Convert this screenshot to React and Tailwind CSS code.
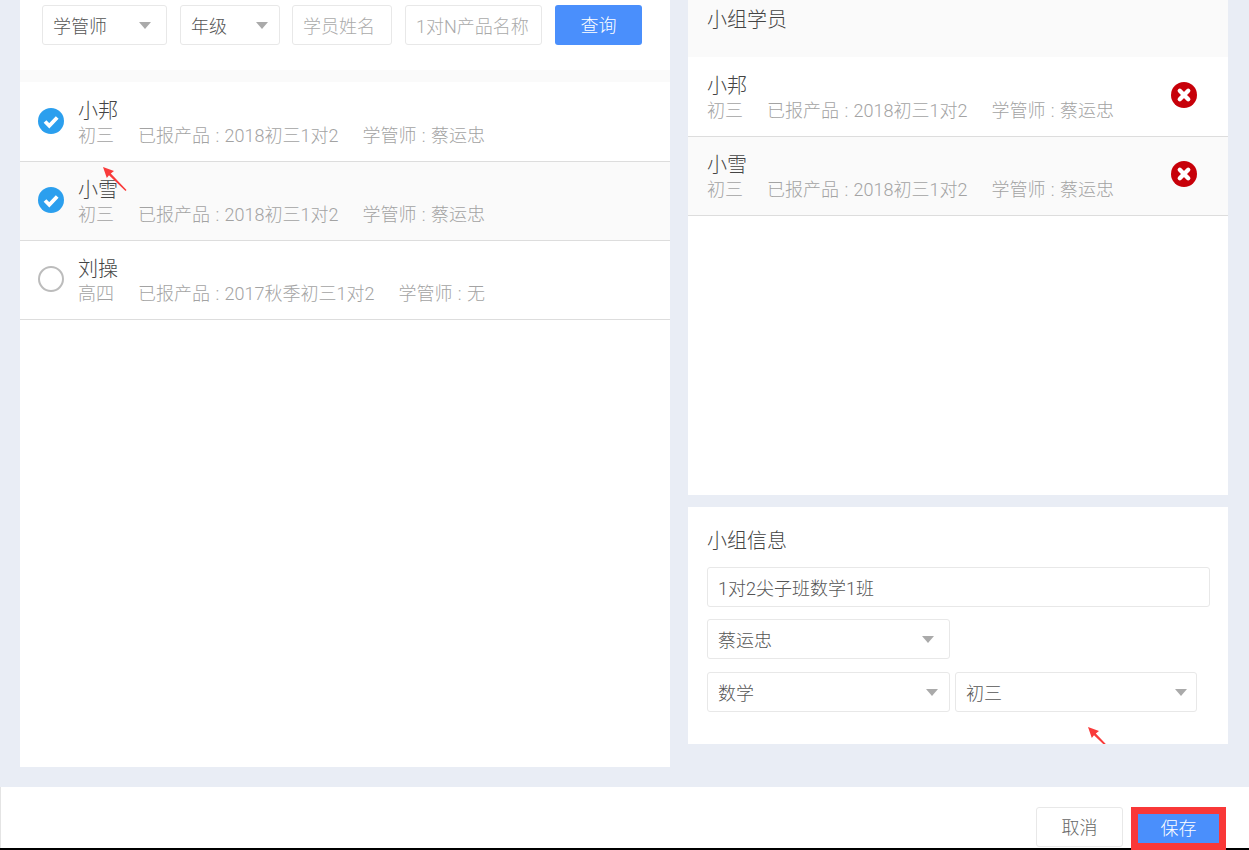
import React from "react";

const fontClass = "font-['Roboto','Noto_Sans_CJK_SC','Noto_Sans',sans-serif]";

const leftStudents = [
  { name: "小邦", grade: "初三", product: "2018初三1对2", teacher: "蔡运忠", checked: true },
  { name: "小雪", grade: "初三", product: "2018初三1对2", teacher: "蔡运忠", checked: true, shaded: true },
  { name: "刘操", grade: "高四", product: "2017秋季初三1对2", teacher: "无" },
];

const groupStudents = [
  { name: "小邦", grade: "初三", product: "2018初三1对2", teacher: "蔡运忠" },
  { name: "小雪", grade: "初三", product: "2018初三1对2", teacher: "蔡运忠", shaded: true },
];

const Caret = () => (
  <span className="w-0 h-0 border-x-[6.5px] border-x-transparent border-t-[7px] border-t-[#aaaaaa]" />
);

const Select = ({ label, className }) => (
  <div
    className={`h-10 flex items-center justify-between pl-[10px] border border-[#e8e8e8] rounded-[3px] bg-white text-[18px] font-light text-[#555555] ${className}`}
  >
    <span className="pt-[2px]">{label}</span>
    <Caret />
  </div>
);

const Field = ({ text, className }) => (
  <div
    className={`h-10 flex items-center px-[10px] pt-[2px] border border-[#e8e8e8] rounded-[3px] bg-white text-[18px] font-light overflow-hidden whitespace-nowrap ${className}`}
  >
    {text}
  </div>
);

const CheckMark = ({ checked }) =>
  checked ? (
    <svg width="26" height="26" viewBox="0 0 26 26">
      <circle cx="13" cy="13" r="13" fill="#2b9fee" />
      <path d="M7 13.500l4.300 4.300L19.200 9.500" fill="none" stroke="#fff" strokeWidth="3.800" />
    </svg>
  ) : (
    <span className="block w-[26px] h-[26px] rounded-full border-2 border-[#bcbcbc]" />
  );

const RemoveIcon = () => (
  <svg width="26" height="26" viewBox="0 0 26 26">
    <circle cx="13" cy="13" r="13" fill="#c70009" />
    <path d="M8.800 8.800l8.400 8.400M17.200 8.800l-8.400 8.400" fill="none" stroke="#fff" strokeWidth="4.400" strokeLinecap="round" />
  </svg>
);

// red annotation arrows; the second one is cut off at the panel edge
const Arrow = ({ className, width = 24, height = 24 }) => (
  <svg className={`absolute ${className}`} width={width} height={height} viewBox={`0 0 ${width} ${height}`}>
    <path d="M0 0l11 4-3.200 2.400L23.500 23l-1 1L6 8.200 3.800 11z" fill="#f93b3b" />
  </svg>
);

const StudentInfo = ({ student }) => (
  <div className="pt-[3px]">
    <p className="text-[20px] leading-[24px] font-light text-[#444444]">{student.name}</p>
    <p className="flex gap-6 text-[18px] leading-[25px] font-light text-[#a3a3a3] whitespace-nowrap">
      <span>{student.grade}</span>
      <span>
        已报产品 <span className="mx-px">:</span> {student.product}
      </span>
      <span>
        学管师 <span className="mx-px">:</span> {student.teacher}
      </span>
    </p>
  </div>
);

const LeftRow = ({ student }) => (
  <div
    className={`h-[79px] flex items-center gap-[14px] pl-[18px] border-b border-[#dddddd] ${
      student.shaded ? "bg-[#fafafa]" : "bg-white"
    }`}
  >
    <div className="mb-[3px]">
      <CheckMark checked={student.checked} />
    </div>
    <StudentInfo student={student} />
  </div>
);

const GroupRow = ({ student }) => (
  <div
    className={`h-[79px] flex items-center justify-between pl-[19px] pr-[31px] border-b border-[#dddddd] ${
      student.shaded ? "bg-[#fafafa]" : "bg-white"
    }`}
  >
    <StudentInfo student={student} />
    <div className="mb-[4px]">
      <RemoveIcon />
    </div>
  </div>
);

export default function App() {
  return (
    <div className={`relative w-[1249px] h-[850px] overflow-hidden bg-[#e9edf5] ${fontClass}`}>
      <div className="flex h-[787px] pl-5 gap-[18px]">
        {/* left: student search */}
        <div className="w-[650px] h-[767px] bg-white">
          <div className="h-[70px] pt-[5px] pl-[22px] flex items-start">
            <Select label="学管师" className="w-[125px] pr-[15px]" />
            <Select label="年级" className="w-[100px] ml-[13px] pr-[11px]" />
            <Field text="学员姓名" className="w-[100px] ml-3 text-[#aaaaaa]" />
            <Field text="1对N产品名称" className="w-[137px] ml-[13px] text-[#aaaaaa]" />
            <button className="w-[87px] h-10 ml-[13px] rounded-[3px] bg-[#4a8ffc] text-white text-[18px] font-light">
              查询
            </button>
          </div>
          <div className="h-3 bg-[#fafafa]" />
          <div className="pt-px">
            {leftStudents.map((student) => (
              <LeftRow key={student.name} student={student} />
            ))}
          </div>
        </div>

        {/* right: group */}
        <div className="w-[540px] flex flex-col gap-3">
          <div className="h-[495px] bg-white">
            <div className="h-[57px] pl-[19px] pt-[5px] bg-[#fafafa] text-[20px] leading-[30px] font-light text-[#444444]">
              小组学员
            </div>
            <div className="pt-px">
              {groupStudents.map((student) => (
                <GroupRow key={student.name} student={student} />
              ))}
            </div>
          </div>
          <div className="h-[237px] bg-white pt-[19px] pl-[19px]">
            <p className="text-[20px] leading-[30px] font-light text-[#444444]">小组信息</p>
            <Field text="1对2尖子班数学1班" className="w-[503px] mt-[11px] text-[#555555]" />
            <Select label="蔡运忠" className="w-[243px] mt-3 pr-[15px]" />
            <div className="flex gap-[5px] mt-[13px]">
              <Select label="数学" className="w-[243px] pr-[11px]" />
              <Select label="初三" className="w-[242px] pr-[9px]" />
            </div>
          </div>
        </div>
      </div>

      {/* footer */}
      <div className="h-[61px] bg-white border-l border-[#e4e4e4] flex justify-end items-start pt-5 pr-[23px]">
        <button className="w-[87px] h-10 pt-px border border-[#e8e8e8] rounded-[3px] bg-white text-[18px] font-light text-[#666666]">
          取消
        </button>
        <button className="relative z-10 w-[95px] h-[43px] ml-2 border-[7px] border-[#f93838] bg-[#4a8ffc] text-white text-[18px] font-light">
          保存
        </button>
      </div>
      <div className="h-[2px] bg-black" />

      <Arrow className="left-[103px] top-[167px]" />
      <Arrow className="left-[1088px] top-[727px]" width={20} height={17} />
    </div>
  );
}
